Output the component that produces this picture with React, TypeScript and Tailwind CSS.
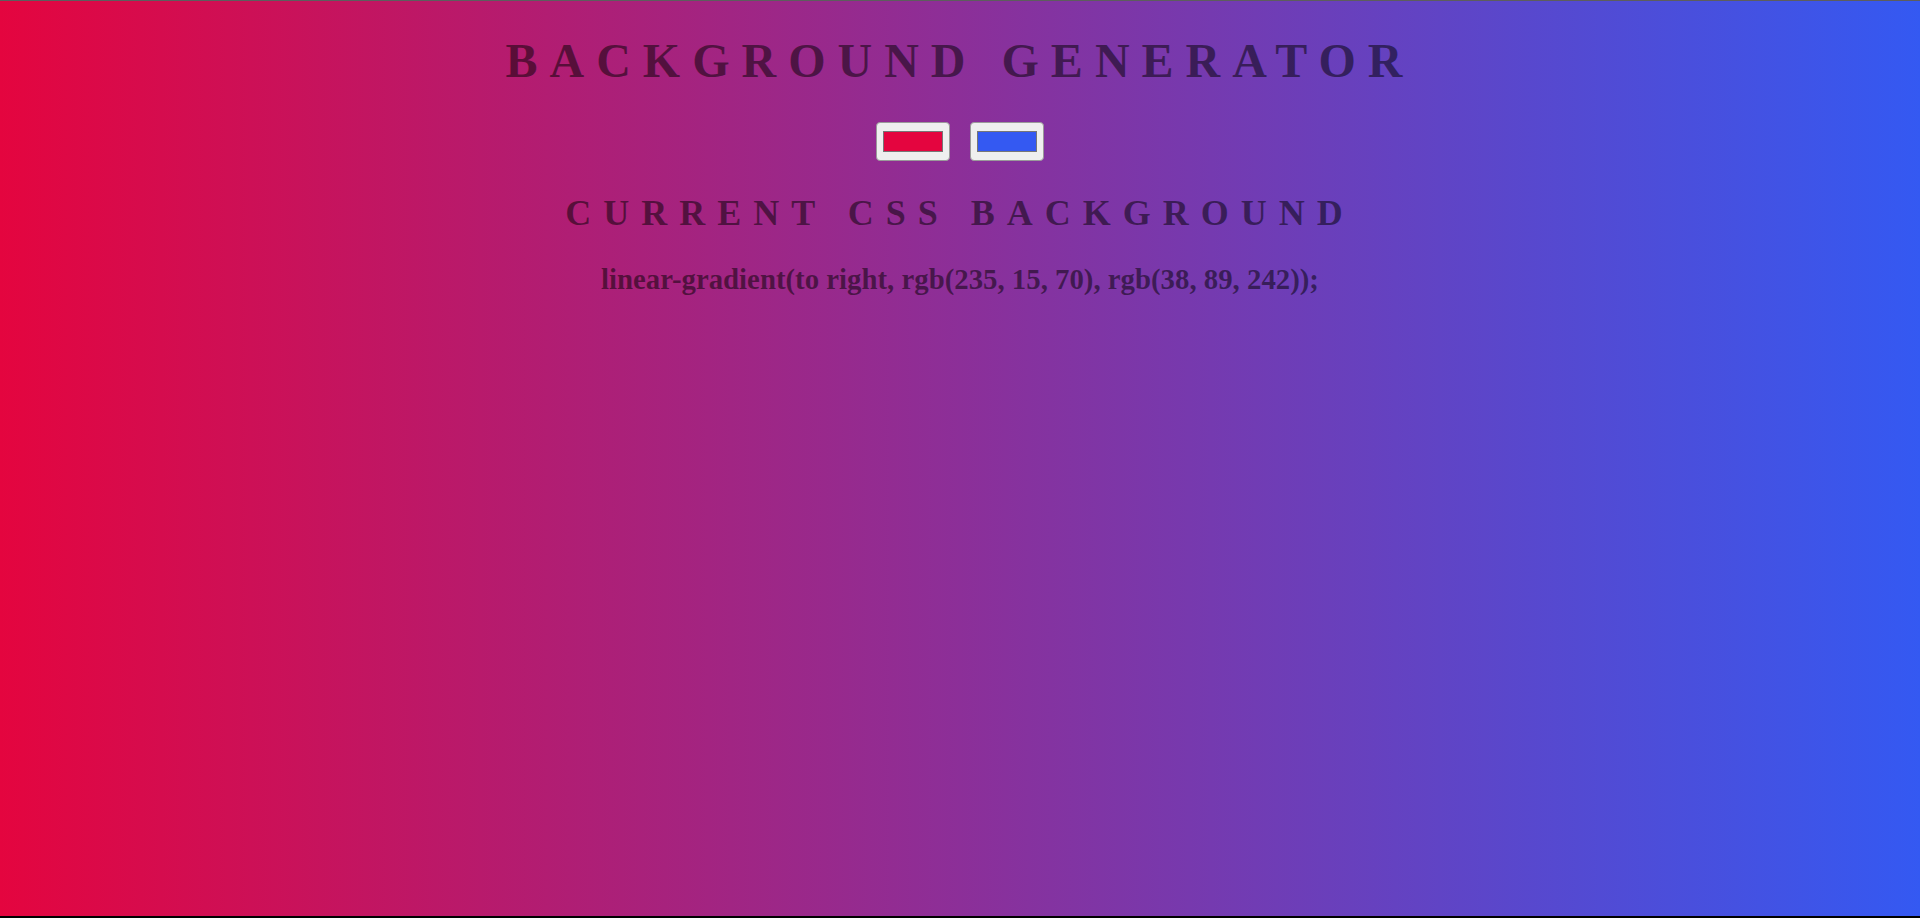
type SwatchProps = {
  color: string;
};

function Swatch({ color }: SwatchProps) {
  return (
    <div className="h-[39px] w-[74px] rounded-[4px] border border-[#9a9a9a] bg-[#efefef] px-[6px] py-[8px]">
      <div
        className="h-full w-full border border-[#777777]"
        style={{ backgroundColor: color }}
      />
    </div>
  );
}

export default function App() {
  const left = "#e4053f";
  const right = "#3459f2";

  return (
    <div
      className="flex h-[918px] w-full flex-col items-center border-t border-b-2 border-t-[#5d5d5d] border-b-black text-center font-['Liberation_Serif',serif] font-bold text-black/50"
      style={{ background: `linear-gradient(to right, ${left}, ${right})` }}
    >
      <h1 className="mt-[36px] h-[48px] text-[48px] uppercase leading-[48px] tracking-[12px]">
        Background Generator
      </h1>
      <div className="mt-[37px] flex gap-[20px]">
        <Swatch color={left} />
        <Swatch color={right} />
      </div>
      <h3 className="mt-[34px] h-[36px] text-[36px] uppercase leading-[36px] tracking-[12px]">
        Current CSS Background
      </h3>
      <p className="mt-[34px] h-[29px] text-[28.8px] leading-[29px]">
        linear-gradient(to right, rgb(235, 15, 70), rgb(38, 89, 242));
      </p>
    </div>
  );
}
